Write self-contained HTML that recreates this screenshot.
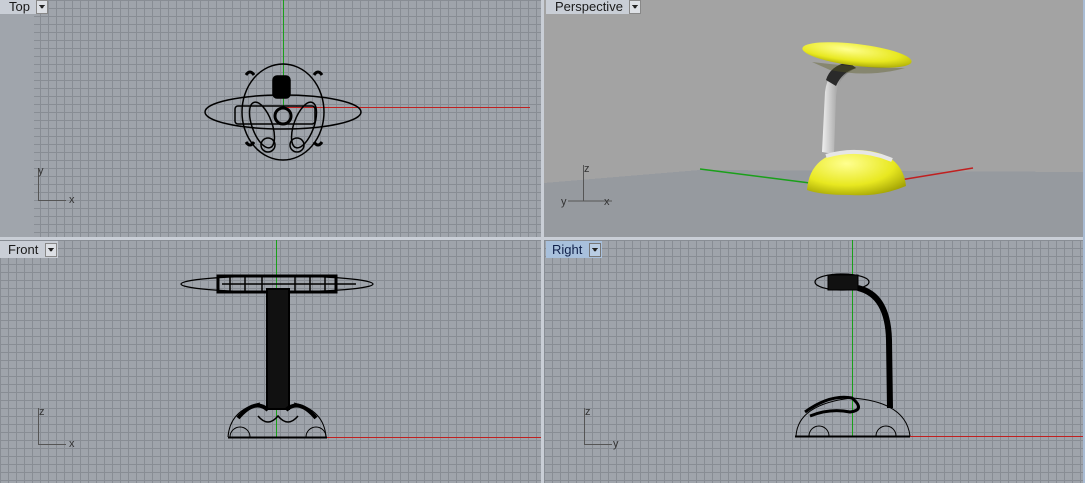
<!DOCTYPE html>
<html><head><meta charset="utf-8"><style>
html,body{margin:0;padding:0;background:#c9ced6;}
svg{display:block}
text{font-family:"Liberation Sans",sans-serif}
</style></head><body>
<svg width="1085" height="483" viewBox="0 0 1085 483" xmlns="http://www.w3.org/2000/svg" shape-rendering="crispEdges">
<defs>
<pattern id="g" x="0" y="0" width="8" height="8" patternUnits="userSpaceOnUse">
<rect width="8" height="8" fill="#9fa4ab"/>
<rect x="0" y="0" width="8" height="1" fill="#888d94"/>
<rect x="0" y="0" width="1" height="8" fill="#888d94"/>
</pattern>
<linearGradient id="pole" x1="0" x2="1">
<stop offset="0" stop-color="#f0f0f0"/><stop offset=".5" stop-color="#a0a0a0"/><stop offset="1" stop-color="#555"/>
</linearGradient>
<radialGradient id="yb" cx=".4" cy=".3" r=".8">
<stop offset="0" stop-color="#ffff90"/><stop offset=".6" stop-color="#e8e820"/><stop offset="1" stop-color="#9a9a00"/>
</radialGradient>
</defs>
<rect width="1085" height="483" fill="#c9ced6"/>
<!-- Top -->
<rect x="0" y="0" width="541" height="237" fill="#a0a5ac"/>
<rect x="34" y="0" width="507" height="237" fill="url(#g)"/>
<rect x="283" y="0" width="1" height="107" fill="#1aa01a"/>
<rect x="283" y="107" width="247" height="1" fill="#c02020"/>
<g fill="none" stroke="#000" stroke-width="1.5" shape-rendering="auto">
<ellipse cx="283" cy="112" rx="78" ry="17"/>
<ellipse cx="283" cy="112" rx="41" ry="48"/>
<rect x="235" y="106" width="80" height="18" rx="3"/>
<rect x="273" y="76" width="17" height="22" rx="4" fill="#000"/>
<circle cx="283" cy="116" r="8" stroke-width="3"/>
<ellipse cx="262" cy="125" rx="10" ry="24" transform="rotate(-20 262 125)"/>
<ellipse cx="304" cy="125" rx="10" ry="24" transform="rotate(20 304 125)"/>
<circle cx="268" cy="145" r="7"/><circle cx="297" cy="145" r="7"/>
<path d="M246 75q4-6 8 0M314 75q4-6 8 0M246 142q4 6 8 0M314 142q4 6 8 0" stroke-width="3"/>
</g>
<path d="M38.5 168V200.5H66" fill="none" stroke="#555" stroke-width="1.2"/>
<text x="38" y="174" font-size="11" fill="#333">y</text>
<text x="69" y="203" font-size="11" fill="#333">x</text>
<!-- Perspective -->
<rect x="544" y="0" width="539" height="237" fill="#a3a3a3"/>
<polygon points="544,183 700,170 1083,172 1083,237 544,237" fill="#969a9f"/>
<g shape-rendering="auto">
<line x1="700" y1="169" x2="810" y2="183" stroke="#1aa01a" stroke-width="1.5"/>
<line x1="900" y1="180" x2="973" y2="168" stroke="#c02020" stroke-width="1.5"/>
<path d="M822 152 L825 92 Q828 68 848 62 L856 68 Q838 76 836 96 L834 154Z" fill="url(#pole)"/>
<path d="M826 80 Q830 66 848 62 L856 68 Q842 72 836 86Z" fill="#2a2a2a"/>
<ellipse cx="857" cy="55" rx="55" ry="11" transform="rotate(7 857 55)" fill="url(#yb)"/>
<path d="M812 62 Q860 68 905 68 Q870 78 830 70Z" fill="#5a5a20" opacity=".4"/>
<path d="M807 190 Q810 152 855 150 Q902 150 906 186 Q880 197 850 195 Q820 195 807 190Z" fill="url(#yb)"/>
<path d="M826 156 Q860 146 892 160" stroke="#e6e6e6" stroke-width="4" fill="none"/>
</g>
<path d="M583.5 165V201H612" fill="none" stroke="#555"/>
<path d="M568 201H583" stroke="#555"/>
<text x="584" y="172" font-size="11" fill="#333">z</text>
<text x="561" y="205" font-size="11" fill="#333">y</text>
<text x="604" y="205" font-size="11" fill="#333">x</text>
<!-- Front -->
<rect x="0" y="240" width="541" height="243" fill="url(#g)"/>
<rect x="276" y="240" width="1" height="197" fill="#1aa01a"/>
<rect x="276" y="437" width="265" height="1" fill="#c02020"/>
<g fill="none" stroke="#000" shape-rendering="auto">
<ellipse cx="277" cy="284" rx="96" ry="8" stroke-width="1.3"/>
<rect x="218" y="276" width="118" height="16" stroke-width="3"/>
<path d="M222 284H356M230 276V292M245 276V292M262 276V292M295 276V292M310 276V292M325 276V292" stroke-width="1.5"/>
<rect x="267" y="289" width="22" height="120" fill="#111" stroke-width="2"/>
<path d="M228 437Q230 410 260 403M326 437Q324 410 294 403" stroke-width="1"/>
<path d="M238 418Q255 398 268 410M316 418Q299 398 286 410" stroke-width="4"/>
<path d="M258 416q10 12 20 0q10 12 20 0" stroke-width="1.5"/>
<path d="M230 437a10 10 0 0 1 20 0M306 437a10 10 0 0 1 20 0" stroke-width="1"/>
<line x1="228" y1="437.5" x2="327" y2="437.5" stroke-width="2"/>
</g>
<path d="M38.5 408V444.5H66" fill="none" stroke="#555" stroke-width="1.2"/>
<text x="39" y="415" font-size="11" fill="#333">z</text>
<text x="69" y="447" font-size="11" fill="#333">x</text>
<!-- Right -->
<rect x="544" y="240" width="539" height="243" fill="url(#g)"/>
<rect x="852" y="240" width="1" height="196" fill="#1aa01a"/>
<rect x="852" y="436" width="231" height="1" fill="#c02020"/>
<g fill="none" stroke="#000" shape-rendering="auto">
<ellipse cx="842" cy="282" rx="27" ry="8" stroke-width="1.2"/>
<rect x="828" y="275" width="30" height="15" fill="#111"/>
<path d="M858 288Q888 295 889 340L890 408" stroke-width="6"/>
<path d="M796 436Q798 404 852 398Q906 402 910 436" stroke-width="1"/>
<path d="M805 412Q830 394 852 398Q866 410 850 412Q830 408 810 416" stroke-width="3"/>
<path d="M809 436a10 10 0 0 1 20 0M876 436a10 10 0 0 1 20 0" stroke-width="1"/>
<line x1="795" y1="436.5" x2="910" y2="436.5" stroke-width="2"/>
</g>
<path d="M584.5 408V444.5H612" fill="none" stroke="#555" stroke-width="1.2"/>
<text x="585" y="415" font-size="11" fill="#333">z</text>
<text x="613" y="447" font-size="11" fill="#333">y</text>
<rect x="1083" y="0" width="2" height="483" fill="#a9bcd4"/>
<!-- tabs -->
<g font-size="13" fill="#1a1a1a">
<rect x="0" y="0" width="48" height="14" fill="#c9ced6"/><text x="9" y="11">Top</text>
<rect x="36.5" y="0.5" width="11" height="13" fill="#dde0e5" stroke="#888"/><path d="M39 5h6l-3 4z" fill="#222"/>
<rect x="546" y="0" width="95" height="14" fill="#c9ced6"/><text x="555" y="11">Perspective</text>
<rect x="629.5" y="0.5" width="11" height="13" fill="#dde0e5" stroke="#888"/><path d="M632 5h6l-3 4z" fill="#222"/>
<rect x="0" y="241" width="58" height="17" fill="#c9ced6"/><text x="8" y="254">Front</text>
<rect x="45.5" y="243.5" width="11" height="13" fill="#dde0e5" stroke="#888"/><path d="M48 248h6l-3 4z" fill="#222"/>
<rect x="546" y="241" width="56" height="17" fill="#a8c0dc"/><text x="552" y="254" fill="#10204a">Right</text>
<rect x="589.5" y="243.5" width="11" height="13" fill="#b9cde4" stroke="#777"/><path d="M592 248h6l-3 4z" fill="#222"/>
</g>
</svg>
</body></html>
